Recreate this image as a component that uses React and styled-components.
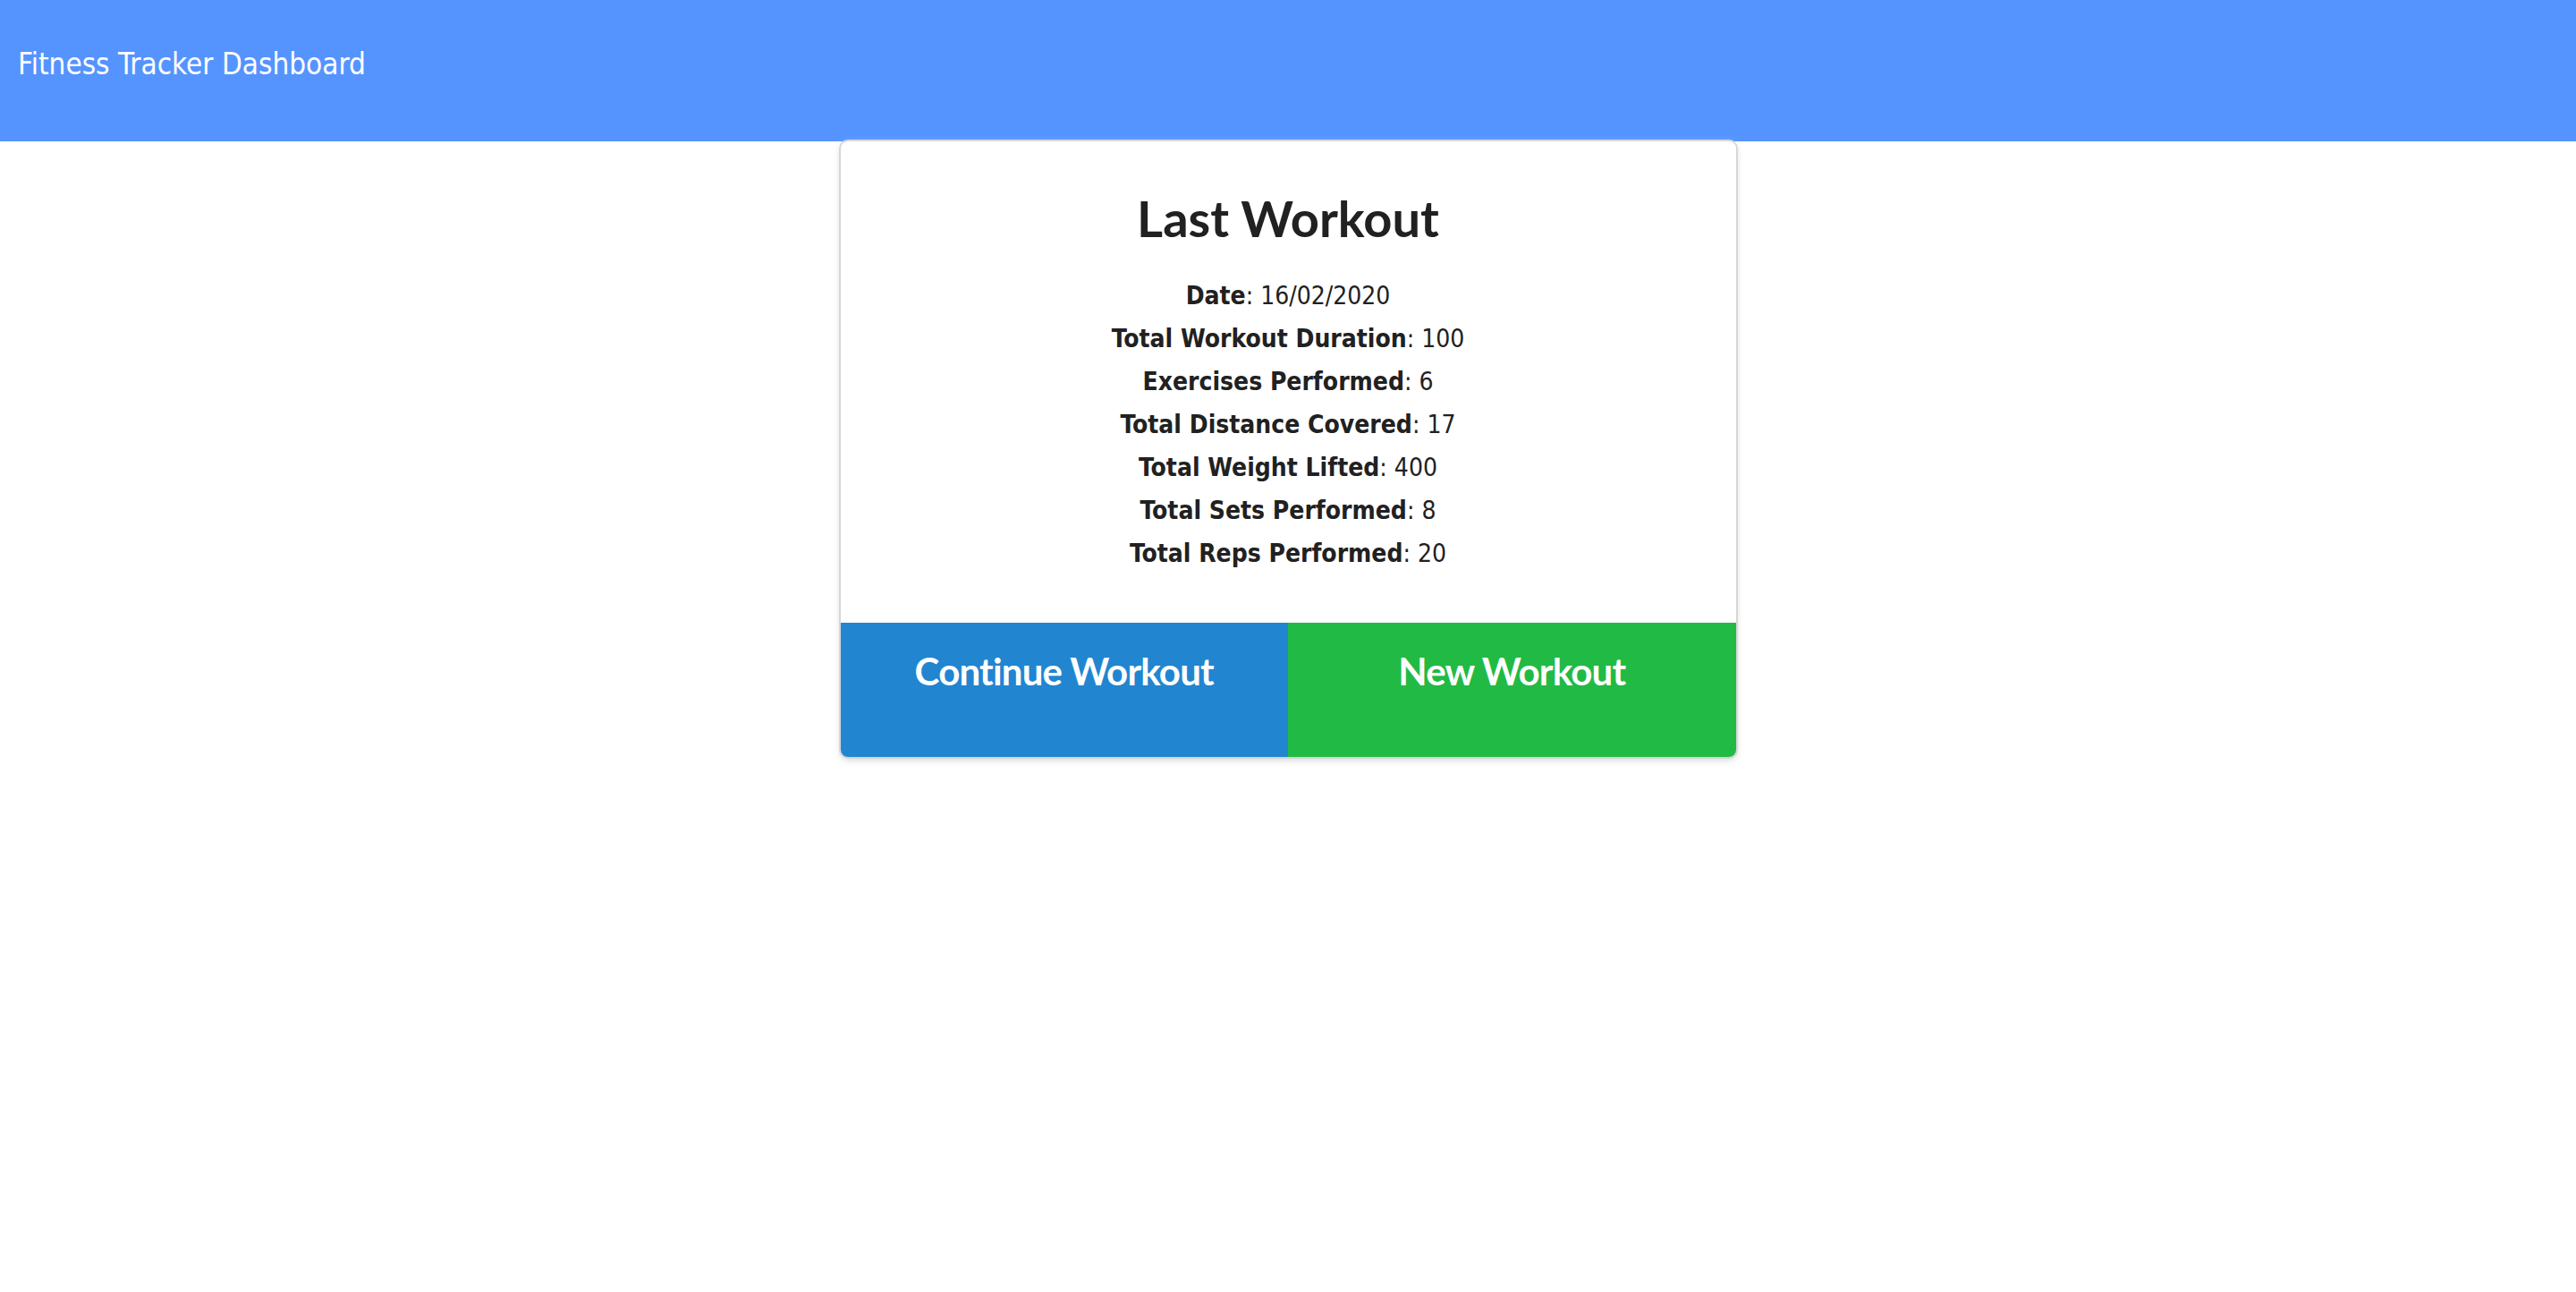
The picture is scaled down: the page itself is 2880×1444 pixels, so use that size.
import React from "react";
import styled, { createGlobalStyle } from "styled-components";

const GlobalStyle = createGlobalStyle`
  html, body {
    margin: 0;
    padding: 0;
    background: #ffffff;
  }
  body {
    font-family: "DejaVu Sans Condensed", "DejaVu Sans", sans-serif;
    font-stretch: condensed;
    color: #212121;
  }
  * { box-sizing: border-box; }
`;

const Page = styled.div`
  display: flex;
  flex-direction: column;
  min-height: 1444px;
`;

const TopBar = styled.header`
  height: 158px;
  background: #5594ff;
  padding: 53px 20px 0;
`;

const Brand = styled.h1`
  margin: 0;
  font-family: "DejaVu Sans Condensed", "DejaVu Sans", sans-serif;
  font-stretch: condensed;
  font-weight: 400;
  font-size: 33px;
  line-height: 38px;
  color: #ffffff;
`;

const Main = styled.main`
  display: flex;
  justify-content: center;
`;

const Card = styled.section`
  width: 1001px;
  display: flex;
  flex-direction: column;
  background: #ffffff;
  border-radius: 8px;
  overflow: hidden;
  box-shadow: 0 3px 8px 0 #d4d4d5, 0 0 0 2px #d8d8d9;
`;

const Content = styled.div`
  padding: 52px 20px 53px;
  display: flex;
  flex-direction: column;
  align-items: center;
`;

const Title = styled.h2`
  margin: 0 0 29px;
  font-family: Lato, "Open Sans", sans-serif;
  font-weight: 700;
  font-size: 56px;
  line-height: 68px;
  color: #212121;
`;

const StatList = styled.div`
  display: flex;
  flex-direction: column;
  align-items: center;
`;

const Stat = styled.div`
  font-family: "DejaVu Sans Condensed", "DejaVu Sans", sans-serif;
  font-stretch: condensed;
  font-size: 28px;
  line-height: 48px;
  color: #212121;
  strong {
    font-weight: 700;
  }
`;

const Actions = styled.div`
  display: grid;
  grid-template-columns: 1fr 1fr;
`;

const ActionButton = styled.button`
  height: 150px;
  border: none;
  margin: 0;
  padding: 29px 10px 0;
  display: flex;
  justify-content: center;
  align-items: flex-start;
  background: ${(p) => (p.$tone === "green" ? "#21ba45" : "#2185d0")};
  color: #ffffff;
  font-family: Lato, "Open Sans", sans-serif;
  font-weight: 700;
  font-size: 42px;
  letter-spacing: -0.8px;
  line-height: 50px;
  cursor: pointer;
`;

const stats = [
  ["Date", "16/02/2020"],
  ["Total Workout Duration", "100"],
  ["Exercises Performed", "6"],
  ["Total Distance Covered", "17"],
  ["Total Weight Lifted", "400"],
  ["Total Sets Performed", "8"],
  ["Total Reps Performed", "20"],
];

export default function App() {
  return (
    <>
      <GlobalStyle />
      <Page>
        <TopBar>
          <Brand>Fitness Tracker Dashboard</Brand>
        </TopBar>
        <Main>
          <Card>
            <Content>
              <Title>Last Workout</Title>
              <StatList>
                {stats.map(([label, value]) => (
                  <Stat key={label}>
                    <strong>{label}</strong>: {value}
                  </Stat>
                ))}
              </StatList>
            </Content>
            <Actions>
              <ActionButton $tone="blue">Continue Workout</ActionButton>
              <ActionButton $tone="green">New Workout</ActionButton>
            </Actions>
          </Card>
        </Main>
      </Page>
    </>
  );
}
